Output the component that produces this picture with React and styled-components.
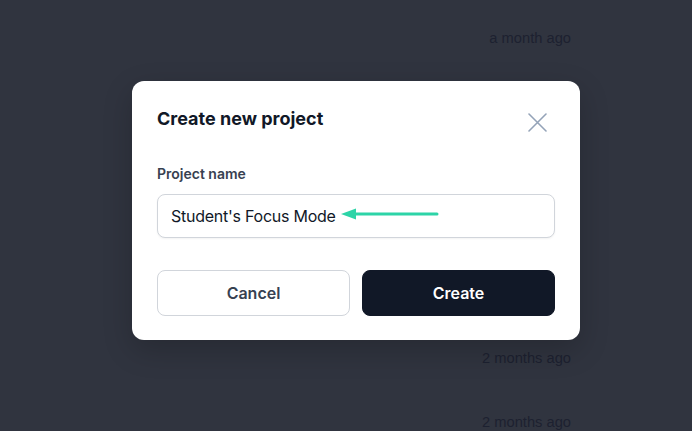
import React from 'react';
import styled, { createGlobalStyle } from 'styled-components';

const GlobalStyle = createGlobalStyle`
	html, body {
		margin: 0;
		padding: 0;
		background: #30343f;
	}
	* {
		box-sizing: border-box;
	}
`;

const Page = styled.div`
	width: 692px;
	height: 431px;
	overflow: hidden;
	position: relative;
	background: #30343f;
	padding-top: 6px;
`;

const Row = styled.div`
	height: 64px;
	display: flex;
	align-items: center;
	justify-content: flex-end;
	padding-right: 121px;
	font-family: "Liberation Sans", Arial, sans-serif;
	font-size: 14.7px;
	color: #1d2130;
`;

const Backdrop = styled.div`
	position: absolute;
	inset: 0;
	display: flex;
	justify-content: center;
	align-items: flex-start;
	padding: 81px 0 0 20px;
`;

const Dialog = styled.div`
	width: 448px;
	background: #ffffff;
	border-radius: 12px;
	padding: 24px 25px 24px 25px;
	font-family: Inter, "Noto Sans", sans-serif;
	box-shadow: 0 10px 30px rgba(0, 0, 0, 0.2);
`;

const Header = styled.div`
	display: flex;
	align-items: center;
	justify-content: space-between;
	height: 28px;
`;

const Title = styled.h2`
	margin: 0;
	font-size: 18px;
	line-height: 28px;
	font-weight: 700;
	color: #111827;
`;

const CloseButton = styled.button`
	border: none;
	background: none;
	padding: 0;
	margin-right: 8px;
	margin-top: 6px;
	width: 20px;
	height: 20px;
	display: flex;
	align-items: center;
	justify-content: center;
	cursor: pointer;
`;

const Label = styled.label`
	display: block;
	margin-top: 31px;
	font-size: 14px;
	line-height: 20px;
	font-weight: 600;
	color: #374151;
`;

const Field = styled.div`
	position: relative;
	margin-top: 10px;
`;

const Input = styled.input`
	width: 100%;
	height: 44px;
	border: 1px solid #d1d5db;
	border-radius: 8px;
	padding: 0 13px;
	font-family: Inter, "Noto Sans", sans-serif;
	font-size: 16px;
	letter-spacing: -0.25px;
	color: #111827;
	background: #fff;
	outline: none;
	box-shadow: 0 1px 2px rgba(0, 0, 0, 0.05);
`;

const Arrow = styled.svg`
	position: absolute;
	left: 184px;
	top: 14px;
	pointer-events: none;
`;

const Actions = styled.div`
	display: grid;
	grid-template-columns: 1fr 1fr;
	gap: 12px;
	margin-top: 32px;
`;

const Button = styled.button`
	height: 46px;
	border-radius: 8px;
	font-family: Inter, "Noto Sans", sans-serif;
	font-size: 16px;
	font-weight: 600;
	cursor: pointer;
	border: 1px solid ${(props) => (props.$primary ? '#111827' : '#d1d5db')};
	background: ${(props) => (props.$primary ? '#111827' : '#ffffff')};
	color: ${(props) => (props.$primary ? '#ffffff' : '#374151')};
`;

const times = ['a month ago', '', '', '', '', '2 months ago', '2 months ago'];

function App() {
	return (
		<Page>
			<GlobalStyle />
			{times.map((t, i) => (
				<Row key={i}>{t}</Row>
			))}
			<Backdrop>
				<Dialog>
					<Header>
						<Title>Create new project</Title>
						<CloseButton aria-label="Close">
							<svg width="19" height="19" viewBox="0 0 19 19" fill="none">
								<path d="M1 1L18 18M18 1L1 18" stroke="#94a3b8" strokeWidth="1.6" strokeLinecap="round" />
							</svg>
						</CloseButton>
					</Header>
					<Label>Project name</Label>
					<Field>
						<Input defaultValue="Student's Focus Mode" />
						<Arrow width="98" height="12" viewBox="0 0 98 12">
							<path d="M0 6L15 0.5V11.5Z" fill="#2dd4a7" />
							<path d="M14 6H96" stroke="#2dd4a7" strokeWidth="3" strokeLinecap="round" />
						</Arrow>
					</Field>
					<Actions>
						<Button>Cancel</Button>
						<Button $primary>Create</Button>
					</Actions>
				</Dialog>
			</Backdrop>
		</Page>
	);
}

export default App;
